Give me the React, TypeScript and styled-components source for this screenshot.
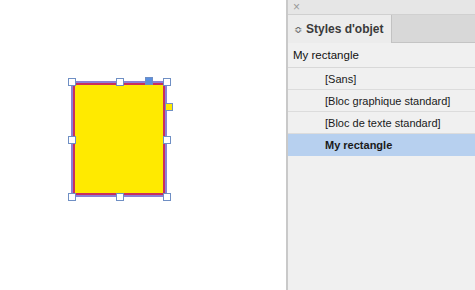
import React from 'react'
import styled, { createGlobalStyle } from 'styled-components'

const GlobalStyle = createGlobalStyle`
  html, body {
    margin: 0;
    padding: 0;
    background: #ffffff;
  }
  body {
    font-family: "Liberation Sans", Arial, sans-serif;
  }
`

const Screen = styled.div`
  display: flex;
  width: 475px;
  height: 290px;
  overflow: hidden;
`

const Canvas = styled.div`
  flex: 1;
  background: #ffffff;
  padding: 81px 0 0 71px;
  box-sizing: border-box;
`

const Frame = styled.div`
  position: relative;
  width: 96px;
  height: 116px;
  box-sizing: border-box;
  border: 2px solid #8a80d8;
`

const Fill = styled.div`
  width: 100%;
  height: 100%;
  box-sizing: border-box;
  border: 2px solid #c8305e;
  background: #ffea00;
`

// selection handles sit over the frame edges
const Handle = styled.div<{ x: string; y: string; color?: string }>`
  position: absolute;
  left: ${({ x }) => x};
  top: ${({ y }) => y};
  width: 8px;
  height: 8px;
  margin: -4px 0 0 -4px;
  box-sizing: border-box;
  background: ${({ color }) => color || '#ffffff'};
  border: 1px solid #6f8fc4;
`

const Panel = styled.div`
  width: 189px;
  display: flex;
  flex-direction: column;
  background: #f0f0f0;
  border-left: 2px solid #c9c9c9;
  box-sizing: border-box;
`

const TitleBar = styled.div`
  height: 14px;
  display: flex;
  align-items: center;
  padding-left: 5px;
  background: #e6e6e6;
  border-bottom: 1px solid #d0d0d0;
  color: #999;
  font-size: 12px;
  line-height: 1;
`

const TabStrip = styled.div`
  height: 27px;
  display: flex;
  background: #d8d8d8;
  border-bottom: 1px solid #c4c4c4;
`

const Tab = styled.div`
  width: 104px;
  display: flex;
  align-items: center;
  gap: 4px;
  padding-left: 6px;
  box-sizing: border-box;
  background: #ececec;
  border-right: 1px solid #c2c2c2;
  margin-bottom: -1px;
  font-size: 12px;
  font-weight: bold;
  color: #3a3a3a;
  white-space: nowrap;
`

const Arrows = styled.span`
  font-size: 10px;
  font-weight: normal;
  color: #555;
`

const Current = styled.div`
  height: 24px;
  display: flex;
  align-items: center;
  padding-left: 5px;
  font-size: 11.5px;
  color: #111;
  border-bottom: 1px solid #d8d8d8;
`

const Row = styled.div<{ selected?: boolean }>`
  height: 21px;
  display: flex;
  align-items: center;
  padding-left: 37px;
  font-size: 11px;
  color: #1a1a1a;
  font-weight: ${({ selected }) => (selected ? 'bold' : 'normal')};
  background: ${({ selected }) => (selected ? '#b7d0ef' : 'transparent')};
  border-bottom: 1px solid ${({ selected }) => (selected ? '#b7d0ef' : '#dcdcdc')};
`

const styles = ['[Sans]', '[Bloc graphique standard]', '[Bloc de texte standard]', 'My rectangle']

export default function App() {
  return (
    <Screen>
      <GlobalStyle />
      <Canvas>
        <Frame>
          <Fill />
          <Handle x="-1px" y="-1px" />
          <Handle x="47px" y="-1px" />
          <Handle x="94px" y="-1px" />
          <Handle x="-1px" y="57px" />
          <Handle x="94px" y="57px" />
          <Handle x="-1px" y="114px" />
          <Handle x="47px" y="114px" />
          <Handle x="94px" y="114px" />
          <Handle x="76px" y="-2px" color="#5a8fe0" />
          <Handle x="96px" y="24px" color="#ffea00" />
        </Frame>
      </Canvas>
      <Panel>
        <TitleBar>×</TitleBar>
        <TabStrip>
          <Tab>
            <Arrows>≎</Arrows>
            Styles d'objet
          </Tab>
        </TabStrip>
        <Current>My rectangle</Current>
        {styles.map((s, i) => (
          <Row key={s} selected={i === styles.length - 1}>
            {s}
          </Row>
        ))}
      </Panel>
    </Screen>
  )
}
